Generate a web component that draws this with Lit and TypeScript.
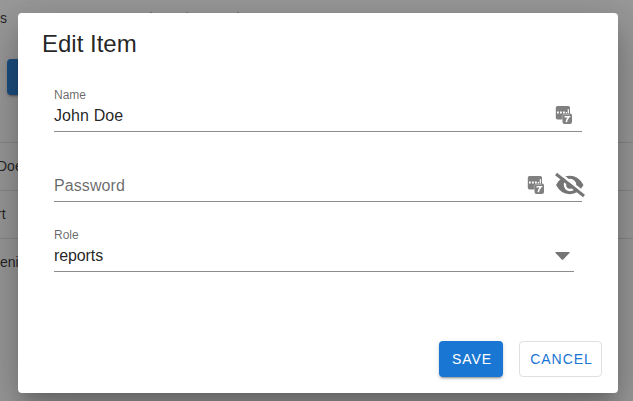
import { LitElement, html, css } from "lit";
import { customElement } from "lit/decorators.js";

const manager = html`<svg class="manager" width="18" height="20" viewBox="0 0 18 20">
  <path fill="#808080" d="M2.500 1h10.500A1.700 1.700 0 0 1 15 3v5.500a2 2 0 0 1 2 2V17a2 2 0 0 1-2 2H9.500a2 2 0 0 1-2-2v-2.500h-5a1.700 1.700 0 0 1-1.700-1.700V2.700A1.700 1.700 0 0 1 2.500 1z"/>
  <path fill="none" stroke="#fff" stroke-width=".6" opacity=".5" d="M14.500 9.500H9a1.800 1.800 0 0 0-1.800 1.800v3.200"/>
  <path fill="#fff" d="M2 6.500h1.800v1.900H2zM5 6.500h1.800v1.900H5zM8 6.500h1.800v1.900H8zM10.800 7h1.200v1.400h-1.200zM12.700 4.200h1.200v4.200h-1.200z"/>
  <path fill="none" stroke="#fff" stroke-width="1.600" d="M9.500 11.800h4.500q-2.200 2.300-2.700 5.400"/>
</svg>`;

@customElement("app-root")
export class AppRoot extends LitElement {
  static styles = css`
    :host { display: grid; width: 633px; height: 401px; overflow: hidden; background: #fff;
      font-family: "Liberation Sans", Arial, sans-serif; color: rgba(0,0,0,.87); }
    .page, .scrim { grid-area: 1 / 1; min-width: 0; min-height: 0; }
    .page { overflow: hidden; }
    .toolbar { height: 94px; box-sizing: border-box; display: grid; grid-template-rows: 59px 36px; }
    .heading { font-size: 14px; line-height: 16px; padding-top: 10px; display: flex; }
    .ticks { display: flex; margin: 2px 0 0 143px; }
    .tick { width: 2px; height: 1px; background: rgba(0,0,0,.25); }
    .tick + .tick { margin-left: 34px; }
    .tick + .tick + .tick { margin-left: 49px; }
    .add { width: 100px; height: 36px; margin-left: 7px; background: #1976d2; border-radius: 4px;
      box-shadow: 0 3px 1px -2px rgba(0,0,0,.2), 0 2px 2px rgba(0,0,0,.14), 0 1px 5px rgba(0,0,0,.12); }
    .rows { margin-top: 1px; }
    .row { height: 48px; box-sizing: border-box; border-bottom: 1px solid rgba(0,0,0,.12);
      font-size: 14px; line-height: 47px; white-space: nowrap; }
    .row.last { border-bottom: 0; }
    .cut { margin-left: -3px; }
    .scrim { z-index: 1; background: rgba(33,33,33,.46); display: flex; justify-content: center; padding: 13px 0 0 3px; }
    .dialog { width: 600px; height: 380px; box-sizing: border-box; background: #fff; border-radius: 4px;
      display: flex; flex-direction: column;
      box-shadow: 0 11px 15px -7px rgba(0,0,0,.2), 0 24px 38px 3px rgba(0,0,0,.14), 0 9px 46px 8px rgba(0,0,0,.12); }
    h1 { margin: 0; padding: 15px 24px 0; font-size: 24px; line-height: 32px; font-weight: 400; }
    .form { padding: 27px 36px 0; flex: 1; }
    .field { height: 70px; box-sizing: border-box; }
    .label { height: 12px; font-size: 12px; line-height: 16px; color: rgba(0,0,0,.6); }
    .control { height: 33px; box-sizing: border-box; border-bottom: 1px solid #8c8c8c;
      display: flex; align-items: center; font-size: 16px; }
    .value { flex: 1; line-height: 20px; padding-top: 1px; }
    .name .value, .password .value { letter-spacing: .1px; }
    .reports { letter-spacing: -.1px; }
    .placeholder { color: rgba(0,0,0,.6); }
    .select { width: 520px; }
    svg { display: block; flex: none; }
    .name .manager { margin: 0 9px 0 0; }
    .password .manager { margin: 0 9px 0 0; }
    .eye { margin: 0 -4px 0 0; }
    .caret { margin: 2px 4px 0 0; }
    .actions { display: flex; justify-content: flex-end; gap: 16px; padding: 0 16px 16px 0; }
    button { height: 36px; box-sizing: border-box; border: 0; border-radius: 4px; padding: 0 0 0 2px; margin: 0;
      font: 14px "Liberation Sans", Arial, sans-serif; letter-spacing: .95px; }
    .save { width: 64px; background: #1976d2; color: #fff;
      box-shadow: 0 3px 1px -2px rgba(0,0,0,.2), 0 2px 2px rgba(0,0,0,.14), 0 1px 5px rgba(0,0,0,.12); }
    .cancel { width: 83px; background: #fff; color: #1976d2; border: 1px solid #e0e0e0; }
  `;

  render() {
    return html`
      <div class="page">
        <div class="toolbar">
          <div class="heading">s<div class="ticks"><i class="tick"></i><i class="tick"></i><i class="tick"></i></div></div>
          <div class="add"></div>
        </div>
        <div class="rows">
          <div class="row"></div>
          <div class="row"><span class="cut">Doe</span></div>
          <div class="row"><span class="cut">rt</span></div>
          <div class="row last">enie</div>
        </div>
      </div>
      <div class="scrim">
        <div class="dialog">
          <h1>Edit Item</h1>
          <div class="form">
            <div class="field name">
              <div class="label">Name</div>
              <div class="control"><span class="value">John Doe</span>${manager}</div>
            </div>
            <div class="field password">
              <div class="label"></div>
              <div class="control"><span class="value placeholder">Password</span>${manager}
                <svg class="eye" width="32" height="26" viewBox="0 0 32 26">
                  <path fill="#757575" fill-rule="evenodd" d="M2 13Q7 3.800 15.700 3.800T29.500 13Q24.500 22.200 15.700 22.200T2 13zM16 6.800a6.200 6.200 0 1 0 0 12.400a6.200 6.200 0 0 0 0-12.400z"/>
                  <circle cx="16" cy="13" r="3.800" fill="#757575"/>
                  <path stroke="#fff" stroke-width="2.500" d="M4 0l27 21.500"/>
                  <path stroke="#757575" stroke-width="3" d="M2 2l28 22"/>
                </svg>
              </div>
            </div>
            <div class="field select">
              <div class="label">Role</div>
              <div class="control"><span class="value reports">reports</span>
                <svg class="caret" width="15" height="8" viewBox="0 0 15 8"><path fill="#757575" d="M.8 0h13.400q.8.300.3.900L8.300 7.400q-.8.700-1.600 0L.5.900Q0 .300.800 0z"/></svg>
              </div>
            </div>
          </div>
          <div class="actions"><button class="save">SAVE</button><button class="cancel">CANCEL</button></div>
        </div>
      </div>`;
  }
}
